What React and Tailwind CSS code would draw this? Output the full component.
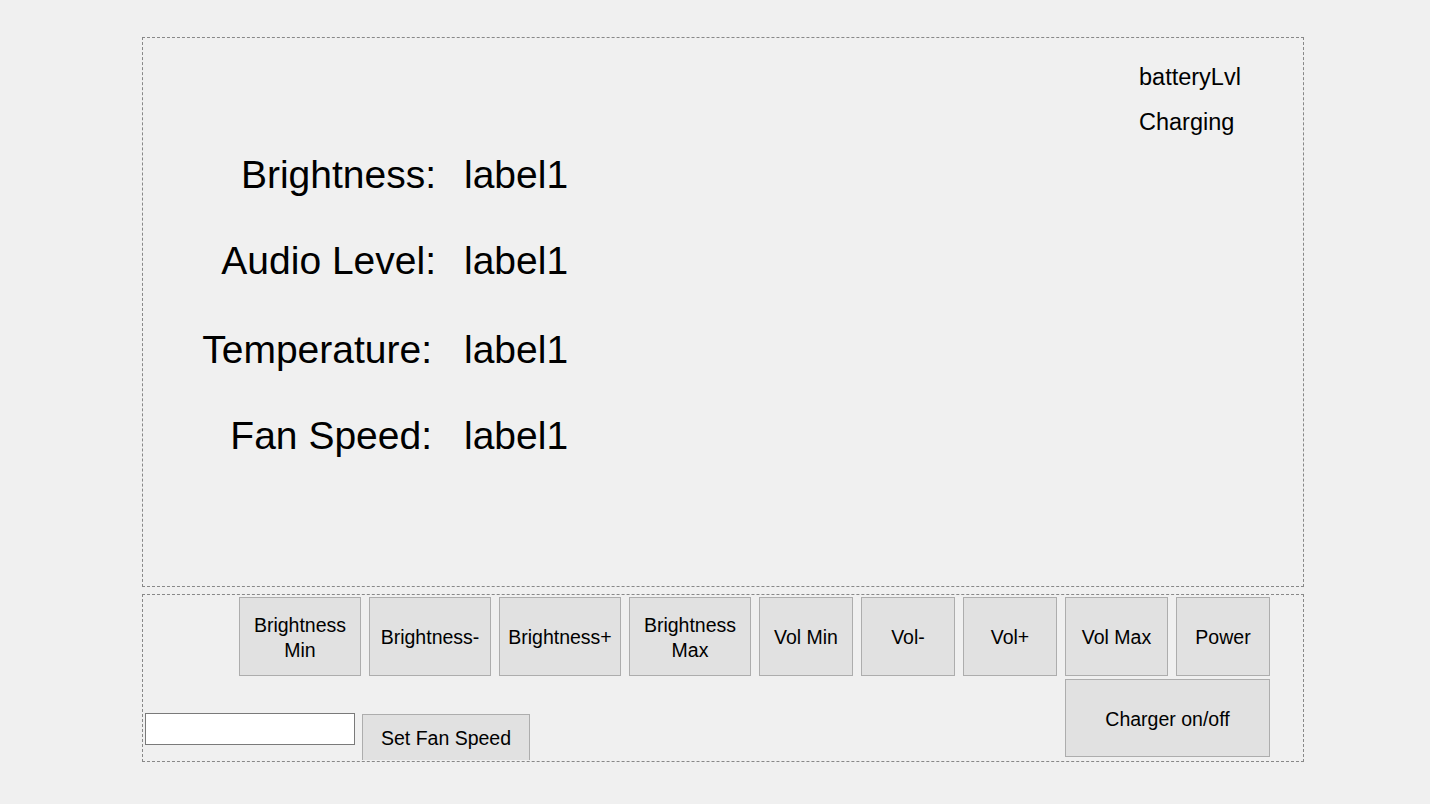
const font = { fontFamily: '"Liberation Sans", Arial, sans-serif' };

const rows = [
    { label: 'Brightness:', mt: 'mt-[6px]', pr: 'pr-0' },
    { label: 'Audio Level:', mt: 'mt-[38px]', pr: 'pr-0' },
    { label: 'Temperature:', mt: 'mt-[41px]', pr: 'pr-[4px]' },
    { label: 'Fan Speed:', mt: 'mt-[38px]', pr: 'pr-[4px]' },
];

const buttons = [
    { text: ['Brightness', 'Min'], w: 'w-[122px]' },
    { text: ['Brightness-'], w: 'w-[122px]' },
    { text: ['Brightness+'], w: 'w-[122px]' },
    { text: ['Brightness', 'Max'], w: 'w-[122px]' },
    { text: ['Vol Min'], w: 'w-[94px]' },
    { text: ['Vol-'], w: 'w-[94px]' },
    { text: ['Vol+'], w: 'w-[94px]' },
    { text: ['Vol Max'], w: 'w-[103px]' },
    { text: ['Power'], w: 'w-[94px]' },
];

const WinButton = ({ lines, className }) => (
    <button
        className={`flex flex-col items-center justify-center pt-[2px] bg-[#e1e1e1] border border-[#adadad] text-black text-[19.5px] leading-[24.5px] ${className}`}
    >
        {lines.map((l) => (
            <span key={l}>{l}</span>
        ))}
    </button>
);

const App = () => {
    return (
        <div className="w-full h-[804px] bg-[#f0f0f0] pl-[142px] pt-[37px] text-black" style={font}>
            {/* display panel */}
            <div className="w-[1162px] h-[550px] border border-dashed border-[#888888]">
                <div className="pt-[17px] pl-[996px] text-[23.5px] leading-[45px]">
                    <div>batteryLvl</div>
                    <div>Charging</div>
                </div>
                {rows.map((r) => (
                    <div key={r.label} className={`flex text-[39px] leading-[48px] ${r.mt}`}>
                        <div className={`w-[293px] text-right whitespace-nowrap ${r.pr}`}>{r.label}</div>
                        <div className="ml-[28px]">label1</div>
                    </div>
                ))}
            </div>

            {/* controls panel */}
            <div className="mt-[7px] w-[1162px] h-[168px] border border-dashed border-[#888888]">
                <div className="flex gap-[8px] pl-[96px] pt-[2px]">
                    {buttons.map((b) => (
                        <WinButton key={b.text.join(' ')} lines={b.text} className={`${b.w} h-[79px]`} />
                    ))}
                </div>
                <div className="flex items-start mt-[3px]">
                    <div className="flex items-start pl-[2px] pt-[34px]">
                        <input
                            type="text"
                            className="w-[210px] h-[32px] bg-white border border-[#7a7a7a] outline-none"
                        />
                        <button className="ml-[7px] mt-[1px] w-[168px] h-[46px] pt-[2px] bg-[#e1e1e1] border border-b-0 border-[#adadad] text-[19.5px] leading-[24.5px] flex items-center justify-center">
                            Set Fan Speed
                        </button>
                    </div>
                    <WinButton lines={['Charger on/off']} className="ml-auto mr-[33px] w-[205px] h-[78px]" />
                </div>
            </div>
        </div>
    );
};

export default App;
